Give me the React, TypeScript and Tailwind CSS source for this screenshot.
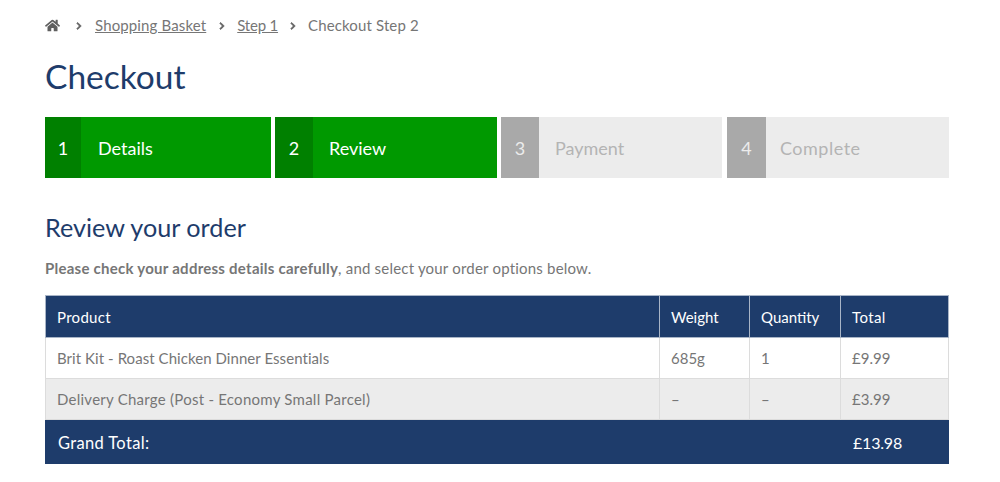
import { FaHome, FaChevronRight } from 'react-icons/fa'

const steps = [
  { n: 1, label: 'Details', done: true, w: 'w-[226px]', nw: 'w-[36px]', pl: 'pl-[17px]', ml: '', ls: '' },
  { n: 2, label: 'Review', done: true, w: 'w-[222px]', nw: 'w-[38px]', pl: 'pl-[16px]', ml: '', ls: '' },
  { n: 3, label: 'Payment', done: false, w: 'w-[221px]', nw: 'w-[38px]', pl: 'pl-[16px]', ml: '', ls: '' },
  { n: 4, label: 'Complete', done: false, w: 'w-[222px]', nw: 'w-[39px]', pl: 'pl-[14px]', ml: 'ml-px', ls: 'tracking-[0.5px]' },
]

function Sep() {
  return <FaChevronRight size={8} className="mt-px stroke-current stroke-[50] text-[#5f5f5f]" />
}

function Cell({ children, className = '' }: { children?: React.ReactNode; className?: string }) {
  return <td className={`border border-[#dcdcdc] px-[11px] align-middle ${className}`}>{children}</td>
}

function HeadCell({ children, className = '' }: { children?: React.ReactNode; className?: string }) {
  return <th className={`border border-[#a9b5c7] px-[11px] pt-px text-left font-normal align-middle ${className}`}>{children}</th>
}

export default function App() {
  return (
    <div className="h-[482px] overflow-hidden bg-white px-[45px] font-['Lato',sans-serif] text-[15px] text-[#767676]">
      {/* breadcrumb */}
      <div className="flex h-[50px] items-center text-[15px] tracking-[0.13px]">
        <FaHome size={15} className="mr-[15px] text-[#5f5f5f]" />
        <Sep />
        <a className="ml-[12px] mr-[12px] underline">Shopping Basket</a>
        <Sep />
        <a className="ml-[11px] mr-[11px] tracking-[-0.2px] underline">Step 1</a>
        <Sep />
        <span className="ml-[11px]">Checkout Step 2</span>
      </div>

      <h1 className="mt-[4px] h-[63px] text-[33.5px] leading-[44px] text-[#1e3c6b]">Checkout</h1>

      {/* steps */}
      <div className="flex w-[904px] gap-[4px]">
        {steps.map((s) => (
          <div
            key={s.n}
            className={`flex h-[61px] ${s.w} ${s.ml} text-[18px] ${s.done ? 'bg-[#009900] text-white' : 'bg-[#ececec] text-[#b4b4b4]'}`}
          >
            <div
              className={`flex ${s.nw} items-center justify-center pt-px ${s.done ? 'bg-[#008000]' : 'bg-[#a9a9a9] text-[#ececec]'}`}
            >
              {s.n}
            </div>
            <div className={`flex items-center pt-px ${s.pl} ${s.ls}`}>{s.label}</div>
          </div>
        ))}
      </div>

      <h2 className="mt-[32px] text-[25.2px] leading-[34px] text-[#1e3c6b]">Review your order</h2>
      <p className="mt-[15px] h-[18px] text-[15px] leading-[18px]">
        <strong className="font-bold tracking-[0.25px]">Please check your address details carefully</strong>
        <span className="tracking-[0.2px]">, and select your order options below.</span>
      </p>

      <table className="mt-[18px] w-[903px] table-fixed border-collapse text-[15px]">
        <colgroup>
          <col className="w-[614px]" />
          <col className="w-[90px]" />
          <col className="w-[91px]" />
          <col className="w-[108px]" />
        </colgroup>
        <thead>
          <tr className="h-[42px] bg-[#1e3c6b] text-white">
            <HeadCell className="tracking-[0.3px]">Product</HeadCell>
            <HeadCell>Weight</HeadCell>
            <HeadCell>Quantity</HeadCell>
            <HeadCell className="tracking-[0.4px]">Total</HeadCell>
          </tr>
        </thead>
        <tbody>
          <tr className="h-[41px] bg-white">
            <Cell className="tracking-[0.06px]">Brit Kit - Roast Chicken Dinner Essentials</Cell>
            <Cell>685g</Cell>
            <Cell>1</Cell>
            <Cell>£9.99</Cell>
          </tr>
          <tr className="h-[41px] bg-[#ececec]">
            <Cell className="tracking-[0.25px]">Delivery Charge (Post - Economy Small Parcel)</Cell>
            <Cell>–</Cell>
            <Cell>–</Cell>
            <Cell>£3.99</Cell>
          </tr>
          <tr className="h-[44px] bg-[#1e3c6b] text-[16.5px] text-white">
            <td colSpan={3} className="border border-[#1e3c6b] px-[12px] pt-[3px] tracking-[0.35px]">
              Grand Total:
            </td>
            <td className="border border-[#1e3c6b] px-[12px] pt-[2px] text-[16px] tracking-[-0.2px]">£13.98</td>
          </tr>
        </tbody>
      </table>
    </div>
  )
}
